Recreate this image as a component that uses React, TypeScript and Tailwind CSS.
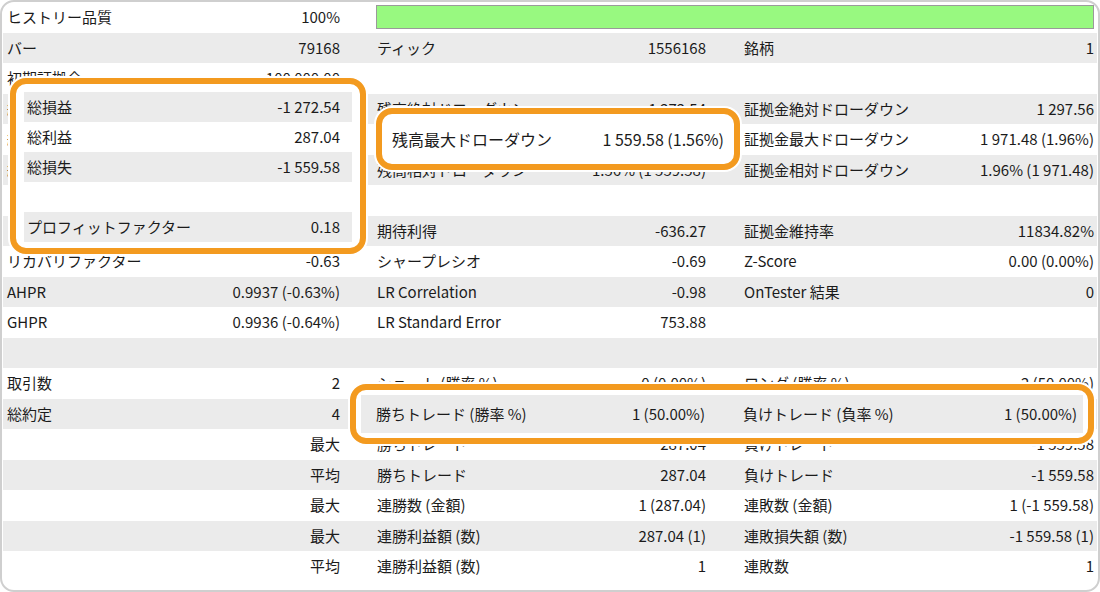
const F = { fontFamily: '"Noto Sans CJK JP", "DejaVu Sans", sans-serif' };

type Cell = [string, string] | null;
const rows: Cell[][] = [
  [["ヒストリー品質", "100%"], null, null],
  [["バー", "79168"], ["ティック", "1556168"], ["銘柄", "1"]],
  [["初期証拠金", "100 000.00"], null, null],
  [["総損益", "-1 272.54"], ["残高絶対ドローダウン", "1 272.54"], ["証拠金絶対ドローダウン", "1 297.56"]],
  [["総利益", "287.04"], ["残高最大ドローダウン", "1 559.58 (1.56%)"], ["証拠金最大ドローダウン", "1 971.48 (1.96%)"]],
  [["総損失", "-1 559.58"], ["残高相対ドローダウン", "1.56% (1 559.58)"], ["証拠金相対ドローダウン", "1.96% (1 971.48)"]],
  [null, null, null],
  [["プロフィットファクター", "0.18"], ["期待利得", "-636.27"], ["証拠金維持率", "11834.82%"]],
  [["リカバリファクター", "-0.63"], ["シャープレシオ", "-0.69"], ["Z-Score", "0.00 (0.00%)"]],
  [["AHPR", "0.9937 (-0.63%)"], ["LR Correlation", "-0.98"], ["OnTester 結果", "0"]],
  [["GHPR", "0.9936 (-0.64%)"], ["LR Standard Error", "753.88"], null],
  [null, null, null],
  [["取引数", "2"], ["ショート (勝率 %)", "0 (0.00%)"], ["ロング (勝率 %)", "2 (50.00%)"]],
  [["総約定", "4"], ["勝ちトレード (勝率 %)", "1 (50.00%)"], ["負けトレード (負率 %)", "1 (50.00%)"]],
  [["", "最大"], ["勝ちトレード", "287.04"], ["負けトレード", "-1 559.58"]],
  [["", "平均"], ["勝ちトレード", "287.04"], ["負けトレード", "-1 559.58"]],
  [["", "最大"], ["連勝数 (金額)", "1 (287.04)"], ["連敗数 (金額)", "1 (-1 559.58)"]],
  [["", "最大"], ["連勝利益額 (数)", "287.04 (1)"], ["連敗損失額 (数)", "-1 559.58 (1)"]],
  [["", "平均"], ["連勝利益額 (数)", "1"], ["連敗数", "1"]],
];

function C({ c, cls }: { c: Cell; cls: string }) {
  return (
    <div className={`flex items-center justify-between ${cls}`}>
      <span>{c?.[0]}</span>
      <span>{c?.[1]}</span>
    </div>
  );
}

export default function App() {
  return (
    <div className="relative w-[1100px] h-[592px] bg-white text-[15px] text-[#1b1b1b]" style={F}>
      <div className="absolute inset-0 rounded-[14px] border-2 border-[#cfcfcf] pointer-events-none" />
      <div className="px-[3px] pt-[2px]">
        {rows.map((r, i) => (
          <div key={i} className={`grid grid-cols-[367px_367px_1fr] h-[30.5px] ${i % 2 ? "bg-[#ebebeb]" : "bg-white"}`}>
            <C c={r[0]} cls="pl-[4px] pr-[30px]" />
            {i === 0 ? (
              <div className="col-span-2 flex items-center pl-[6px] pr-[3px]">
                <div className="h-[24px] w-full bg-[#98f980] border border-[#9a9a9a]" />
              </div>
            ) : (
              <>
                <C c={r[1]} cls="pl-[7px] pr-[31px]" />
                <C c={r[2]} cls="pl-[7px] pr-[3px]" />
              </>
            )}
          </div>
        ))}
      </div>

      {/* highlight 1 */}
      <div className="absolute left-[10px] top-[78px] w-[356px] h-[176px] rounded-[16px] bg-white border-[6px] border-[#f39a1f] ring-2 ring-white p-[8px]">
        <div className="flex flex-col">
          {[["総損益", "-1 272.54"], ["総利益", "287.04"], ["総損失", "-1 559.58"], null, ["プロフィットファクター", "0.18"]].map((c, i) => (
            <div key={i} className={`flex items-center justify-between h-[30px] pl-[3px] pr-[12px] ${i % 2 ? "bg-white" : "bg-[#ebebeb]"}`}>
              <span>{c?.[0]}</span>
              <span>{c?.[1]}</span>
            </div>
          ))}
        </div>
      </div>

      {/* highlight 2 */}
      <div className="absolute left-[376px] top-[108px] w-[364px] h-[62px] rounded-[16px] bg-white border-[6px] border-[#f39a1f] ring-2 ring-white flex items-center justify-between pl-[10px] pr-[10px] text-[16px]">
        <span>残高最大ドローダウン</span>
        <span>1 559.58 (1.56%)</span>
      </div>

      {/* highlight 3 */}
      <div className="absolute left-[350px] top-[384px] w-[744px] h-[60px] rounded-[16px] bg-white border-[6px] border-[#f39a1f] ring-2 ring-white p-[5px]">
        <div className="grid grid-cols-[375px_1fr] h-full bg-[#ebebeb]">
          <div className="flex items-center justify-between pl-[15px] pr-[31px]">
            <span>勝ちトレード (勝率 %)</span>
            <span>1 (50.00%)</span>
          </div>
          <div className="flex items-center justify-between pl-[7px] pr-[6px]">
            <span>負けトレード (負率 %)</span>
            <span>1 (50.00%)</span>
          </div>
        </div>
      </div>
    </div>
  );
}
